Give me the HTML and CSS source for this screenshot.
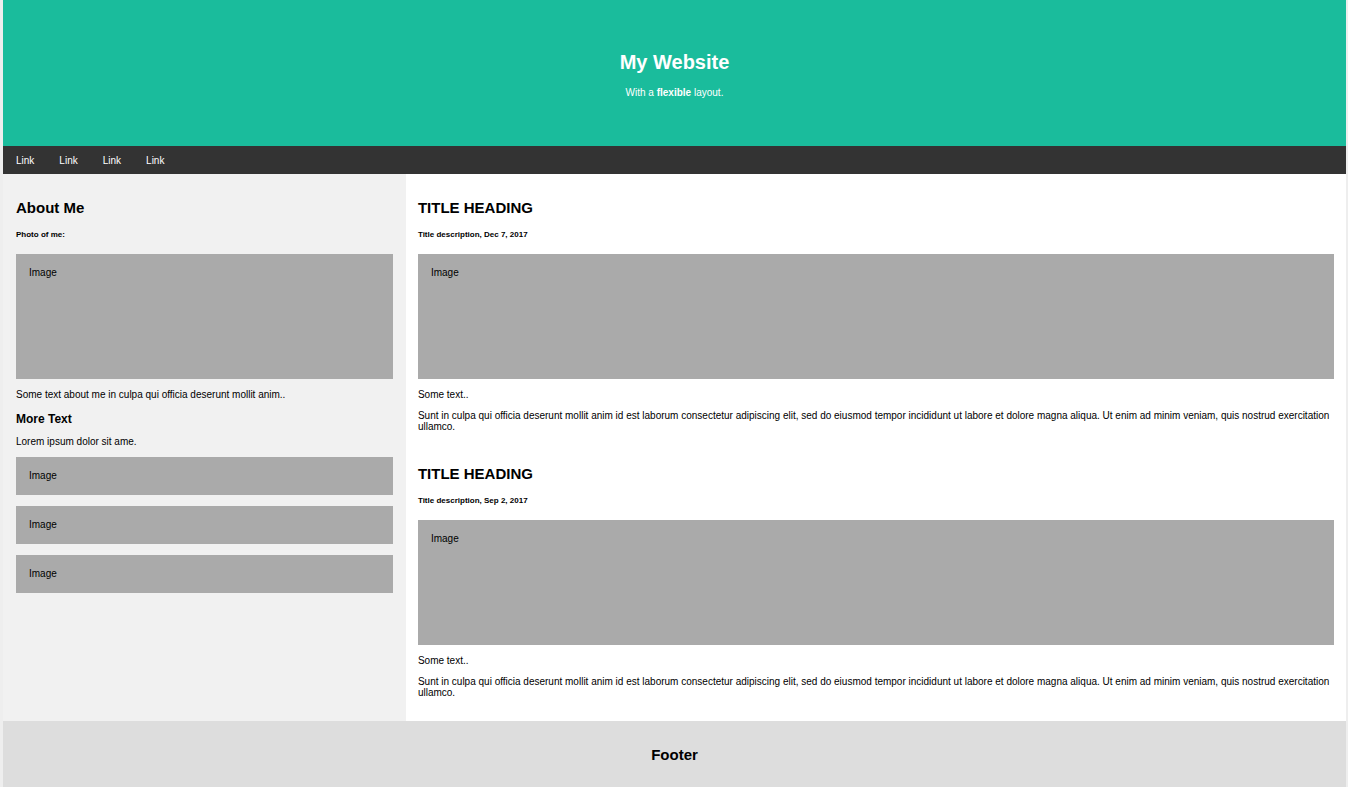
FILE: index.html
```
<!DOCTYPE html>
<html lang="en">
<head>
<meta charset="utf-8">
<meta name="viewport" content="width=device-width, initial-scale=1">
<title>My Website</title>
<link rel="stylesheet" href="styles.css">
</head>
<body>
<header class="header">
  <h1>My Website</h1>
  <p>With a <b>flexible</b> layout.</p>
</header>
<nav class="navbar">
  <a href="#">Link</a>
  <a href="#">Link</a>
  <a href="#">Link</a>
  <a href="#">Link</a>
</nav>
<div class="row">
  <aside class="side">
    <h2>About Me</h2>
    <h5>Photo of me:</h5>
    <div class="image image-large">Image</div>
    <p>Some text about me in culpa qui officia deserunt mollit anim..</p>
    <h3>More Text</h3>
    <p>Lorem ipsum dolor sit ame.</p>
    <div class="thumbs">
      <div class="image">Image</div>
      <div class="image">Image</div>
      <div class="image">Image</div>
    </div>
  </aside>
  <main class="main">
    <article class="post">
      <h2>TITLE HEADING</h2>
      <h5>Title description, Dec 7, 2017</h5>
      <div class="image image-large">Image</div>
      <p>Some text..</p>
      <p>Sunt in culpa qui officia deserunt mollit anim id est laborum consectetur adipiscing elit, sed do eiusmod tempor incididunt ut labore et dolore magna aliqua. Ut enim ad minim veniam, quis nostrud exercitation ullamco.</p>
    </article>
    <article class="post">
      <h2>TITLE HEADING</h2>
      <h5>Title description, Sep 2, 2017</h5>
      <div class="image image-large">Image</div>
      <p>Some text..</p>
      <p>Sunt in culpa qui officia deserunt mollit anim id est laborum consectetur adipiscing elit, sed do eiusmod tempor incididunt ut labore et dolore magna aliqua. Ut enim ad minim veniam, quis nostrud exercitation ullamco.</p>
    </article>
  </main>
</div>
<footer class="footer">
  <h2>Footer</h2>
</footer>
</body>
</html>
```
FILE: styles.css
```
* {
  box-sizing: border-box;
}

html {
  background: #eee;
}

body {
  margin: 0 2px 0 3px;
  font-family: "Liberation Sans", Arial, Helvetica, sans-serif;
  font-size: 10px;
  line-height: 11px;
  color: #000;
}

h1, h2, h3, h5, p {
  margin: 0;
}

h1 {
  font-size: 20px;
  line-height: 23px;
}

h2 {
  font-size: 15px;
  line-height: 17px;
}

h3 {
  margin-top: 12px;
  font-size: 12px;
  line-height: 14px;
}

h5 {
  margin: 14px 0;
  font-size: 8px;
  line-height: 10px;
}

.header {
  padding: 51px 50px 48px;
  background: #1abc9c;
  color: #fff;
  text-align: center;
}

.header p {
  margin-top: 13px;
}

.navbar {
  display: flex;
  background: #333;
}

.navbar a {
  padding: 9px 12px 8px 13px;
  color: #fff;
  text-decoration: none;
}

.navbar a:hover {
  background: #ddd;
  color: #000;
}

.row {
  display: flex;
}

.side {
  flex: 30%;
  padding: 25px 13px;
  background: #f1f1f1;
}

.main {
  flex: 70%;
  display: flex;
  flex-direction: column;
  gap: 33px;
  padding: 25px 12px 23px;
  background: #fff;
}

.side p,
.main p {
  margin-top: 10px;
}

.image {
  padding: 13px 13px 14px;
  background: #aaa;
}

.image-large {
  height: 125px;
}

.thumbs {
  display: grid;
  gap: 11px;
  margin-top: 10px;
}

.footer {
  padding: 25px 12px 24px;
  background: #ddd;
  text-align: center;
}

@media (max-width: 700px) {
  .row {
    flex-direction: column;
  }
}
```
